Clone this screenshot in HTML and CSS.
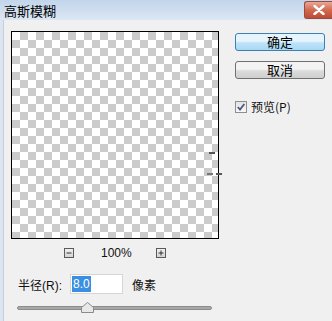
FILE: index.html
```html
<!DOCTYPE html>
<html lang="zh-CN">
<head>
    <meta charset="UTF-8">
    <title>高斯模糊</title>
    <link rel="stylesheet" href="styles.css">
</head>
<body>
    <div class="window">
        <div class="titlebar">
            <span class="title">高斯模糊</span>
            <span class="close">
                <svg width="12" height="10" viewBox="0 0 12 10"><path d="M1.5 1 L10.5 9 M10.5 1 L1.5 9" stroke="#fff" stroke-width="2.4" stroke-linecap="round"/></svg>
            </span>
        </div>
        <div class="content">
            <div class="left">
                <div class="preview">
                    <span class="mark mark-a"></span>
                    <span class="mark mark-b"></span>
                    <span class="mark mark-c"></span>
                </div>
                <div class="zoom-row">
                    <span class="zoom-btn">
                        <svg width="10" height="10" viewBox="0 0 10 10"><path d="M2.5 5 H7.5" stroke="#333" stroke-width="1"/></svg>
                    </span>
                    <span class="pct">100%</span>
                    <span class="zoom-btn">
                        <svg width="10" height="10" viewBox="0 0 10 10"><path d="M2.5 5 H7.5 M5 2.5 V7.5" stroke="#333" stroke-width="1"/></svg>
                    </span>
                </div>
                <div class="radius-row">
                    <span class="label">半径(R):</span>
                    <span class="field"><span class="sel">8.0</span></span>
                    <span class="unit">像素</span>
                </div>
                <div class="slider">
                    <span class="thumb">
                        <svg width="13" height="11" viewBox="0 0 13 11"><path d="M6.5 0.5 L12.5 5.5 V10.5 H0.5 V5.5 Z" fill="#e8e8e8" stroke="#8a8a8a"/></svg>
                    </span>
                </div>
            </div>
            <div class="right">
                <button class="btn btn-default">确定</button>
                <button class="btn">取消</button>
                <label class="check">
                    <span class="box">
                        <svg width="10" height="10" viewBox="0 0 10 10"><path d="M1.8 5 L4 7.5 L8.3 2" fill="none" stroke="#4a5a7a" stroke-width="1.8"/></svg>
                    </span>
                    预览(P)
                </label>
            </div>
        </div>
    </div>
</body>
</html>
```

FILE: styles.css
```css
html, body {
    margin: 0;
    padding: 0;
}
body {
    width: 332px;
    height: 321px;
    overflow: hidden;
    font-family: "Liberation Sans", "Noto Sans CJK SC", sans-serif;
    font-size: 12px;
    color: #111;
}
.window {
    width: 332px;
    height: 321px;
    background: #f0f0f0;
    box-sizing: border-box;
    border-left: 3px solid #dbe6f1;
}
.titlebar {
    height: 20px;
    display: flex;
    align-items: center;
    justify-content: space-between;
    background: linear-gradient(#c2d5ea, #dbe7f4);
    margin-left: -3px;
    padding-left: 4px;
}
.title {
    font-family: "Noto Sans CJK SC", sans-serif;
    font-size: 13px;
    color: #000;
}
.close {
    width: 27px;
    height: 16px;
    margin-top: -1px;
    border: 1px solid #9b4a3c;
    border-right: none;
    border-radius: 3px 0 0 3px;
    background: linear-gradient(#e9a897, #d06a52 50%, #c04a33);
    display: flex;
    align-items: center;
    justify-content: center;
}
.close svg {
    display: block;
}
.content {
    display: flex;
    border-left: 1px solid #c3d0dc;
    height: 301px;
    box-sizing: border-box;
}
.left {
    width: 208px;
    padding: 11px 0 0 7px;
}
.preview {
    position: relative;
    width: 206px;
    height: 206px;
    border: 1px solid #000;
    background: repeating-conic-gradient(#cbcbcb 0 25%, #fff 0 50%) 0 0 / 16px 16px;
}
.mark {
    position: absolute;
    height: 2px;
    background: #555;
}
.mark-a { left: 197px; top: 120px; width: 6px; }
.mark-b { left: 195px; top: 141px; width: 6px; background: #777; }
.mark-c { left: 204px; top: 141px; width: 6px; }
.zoom-row {
    display: flex;
    justify-content: center;
    align-items: center;
    gap: 27px;
    width: 208px;
    margin-top: 7px;
    height: 14px;
}
.zoom-btn {
    width: 10px;
    height: 10px;
    box-sizing: border-box;
    border: 1px solid #5a5a5a;
    background: linear-gradient(#f0f0f0, #d4d4d4);
    display: flex;
}
.zoom-btn svg {
    margin: -1px;
}
.pct {
    font-size: 12px;
    width: 28px;
    text-align: center;
}
.radius-row {
    display: flex;
    align-items: center;
    margin-top: 14px;
    padding-left: 7px;
    height: 20px;
}
.label {
    width: 52px;
    flex-shrink: 0;
}
.field {
    width: 53px;
    flex-shrink: 0;
    height: 20px;
    box-sizing: border-box;
    border: 1px solid #d6d6d6;
    background: #fff;
    display: flex;
    align-items: center;
    padding-left: 1px;
}
.sel {
    background: #3b8fe0;
    color: #fff;
    line-height: 16px;
    padding: 0 1px;
}
.unit {
    margin-left: 9px;
    white-space: nowrap;
    font-family: "Noto Sans CJK SC", sans-serif;
}
.slider {
    position: relative;
    margin: 12px 0 0 6px;
    width: 195px;
    height: 4px;
    border-radius: 2px;
    background: #a8a8a8;
    border: 1px solid #8c8c8c;
    box-sizing: border-box;
}
.thumb {
    position: absolute;
    left: 63px;
    top: -5px;
}
.thumb svg {
    display: block;
}
.right {
    padding: 13px 0 0 16px;
    display: flex;
    flex-direction: column;
    align-items: flex-start;
}
.btn {
    width: 90px;
    height: 18px;
    padding: 0;
    font-family: "Noto Sans CJK SC", sans-serif;
    font-size: 13px;
    line-height: 14px;
    color: #000;
    border: 1px solid #707070;
    border-radius: 3px;
    background: linear-gradient(#f3f3f3 45%, #dcdcdc 55%, #cfcfcf);
    margin-bottom: 10px;
}
.btn-default {
    border-color: #3c7fb1;
    background: linear-gradient(#e6f5fd 45%, #bfe3f8 55%, #a7d8f5);
}
.check {
    display: flex;
    align-items: center;
    gap: 4px;
    margin-top: 9px;
    font-family: "Noto Sans CJK SC", sans-serif;
}
.box {
    width: 12px;
    height: 12px;
    box-sizing: border-box;
    border: 1px solid #8e8f8f;
    background: linear-gradient(#e4e4e4, #f8f8f8);
    display: flex;
    align-items: center;
    justify-content: center;
}
.box svg {
    display: block;
}
```
